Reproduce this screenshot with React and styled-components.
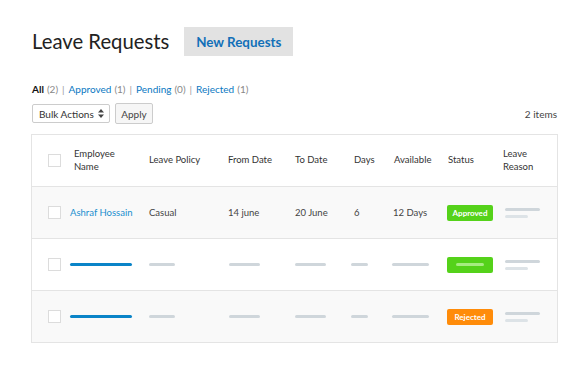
import React from "react";
import styled, { createGlobalStyle } from "styled-components";

const Global = createGlobalStyle`
  html, body { margin: 0; padding: 0; background: #fff; }
  body { font-family: Lato, "Open Sans", sans-serif; color: #333; }
`;

const Page = styled.div`
  padding: 27px 29px 0 31px;
`;

const TitleRow = styled.div`
  display: flex;
  align-items: center;
  height: 29px;
  padding-left: 1px;
`;

const Title = styled.h1`
  margin: 0;
  font-size: 20.3px;
  font-weight: 400;
  color: #222;
  line-height: 29px;
`;

const NewButton = styled.button`
  margin-left: 15px;
  height: 29px;
  width: 109px;
  border: none;
  background: #e2e2e2;
  color: #1270b8;
  font-family: Lato, sans-serif;
  font-size: 13.4px;
  font-weight: 700;
  padding: 0;
  cursor: pointer;
`;

const Filters = styled.div`
  margin-top: 27px;
  padding-left: 1px;
  font-size: 10px;
  line-height: 12px;
  color: #888;
  display: flex;
  gap: 4px;
`;

const FilterItem = styled.span`
  color: ${(p) => (p.$active ? "#111" : "#0a78c2")};
  font-weight: ${(p) => (p.$active ? 700 : 400)};
`;

const Count = styled.span`
  color: #888;
  margin-left: 3px;
`;

const Sep = styled.span`
  color: #999;
`;

const Toolbar = styled.div`
  margin-top: 8px;
  display: flex;
  align-items: center;
  padding-left: 1px;
`;

const Select = styled.div`
  display: flex;
  align-items: center;
  justify-content: space-between;
  height: 19px;
  width: 78px;
  box-sizing: border-box;
  border: 1px solid #ccc;
  border-radius: 2px;
  padding: 0 5px 0 6px;
  font-size: 10px;
  color: #333;
  background: #fff;
`;

const ApplyButton = styled.button`
  margin-left: 5px;
  height: 21px;
  width: 38px;
  border: 1px solid #ccc;
  border-radius: 2px;
  background: #f6f6f6;
  font-family: Lato, sans-serif;
  font-size: 10px;
  color: #444;
  padding: 0;
`;

const Items = styled.span`
  margin-left: auto;
  font-size: 10px;
  color: #444;
`;

const Table = styled.div`
  margin-top: 10px;
  border: 1px solid #e4e4e4;
  width: 527px;
  box-sizing: border-box;
`;

const Row = styled.div`
  display: grid;
  grid-template-columns: 22px 79px 79px 67px 57px 41px 54px 56px 1fr;
  align-items: center;
  height: 51px;
  padding-left: 16px;
  background: ${(p) => (p.$shade ? "#f9f9f9" : "#fff")};
  border-top: ${(p) => (p.$first ? "none" : "1px solid #e4e4e4")};
  font-size: 9.5px;
  color: #333;
`;

const HeadCell = styled.div`
  font-size: 9.5px;
  line-height: 12.5px;
  color: #333;
  padding-left: ${(p) => p.$pl || 0}px;
`;

const Cell = styled.div`
  color: #444;
  padding-left: ${(p) => p.$pl || 0}px;
`;

const NameLink = styled.a`
  color: #1a8fcf;
  text-decoration: none;
`;

const Checkbox = styled.span`
  display: block;
  width: 11px;
  height: 11px;
  border: 1px solid #dcdcdc;
  background: #fff;
`;

const Bar = styled.span`
  display: block;
  height: 3px;
  border-radius: 2px;
  width: ${(p) => p.$w}px;
  background: ${(p) => p.$color || "#cfd6db"};
  margin-left: ${(p) => p.$ml || 0}px;
`;

const Badge = styled.span`
  display: flex;
  align-items: center;
  justify-content: center;
  width: 46px;
  height: 16px;
  border-radius: 2px;
  box-sizing: border-box;
  background: ${(p) => p.$bg};
  color: #fff;
  font-size: 8px;
  font-weight: 700;
`;

const Reason = styled.div`
  display: flex;
  flex-direction: column;
  gap: 4px;
  margin-left: 2px;
`;

const SortIcon = () => (
  <svg width="6" height="9" viewBox="0 0 6 9">
    <path d="M3 0 L6 3.5 H0 Z" fill="#444" />
    <path d="M3 9 L6 5.5 H0 Z" fill="#444" />
  </svg>
);

const ReasonLines = () => (
  <Reason>
    <Bar $w={35} />
    <Bar $w={23} $color="#dde3e7" />
  </Reason>
);

const PlaceholderRow = ({ shade, status }) => (
  <Row $shade={shade}>
    <Checkbox />
    <Bar $w={62} $color="#0a84c8" />
    <Bar $w={26} />
    <Bar $w={31} $ml={1} />
    <Bar $w={31} />
    <Bar $w={17} $ml={-1} />
    <Bar $w={37} $ml={-1} />
    <div>{status}</div>
    <ReasonLines />
  </Row>
);

export default function App() {
  return (
    <Page>
      <Global />
      <TitleRow>
        <Title>Leave Requests</Title>
        <NewButton>New Requests</NewButton>
      </TitleRow>
      <Filters>
        <span>
          <FilterItem $active>All</FilterItem>
          <Count>(2)</Count>
        </span>
        <Sep>|</Sep>
        <span>
          <FilterItem>Approved</FilterItem>
          <Count>(1)</Count>
        </span>
        <Sep>|</Sep>
        <span>
          <FilterItem>Pending</FilterItem>
          <Count>(0)</Count>
        </span>
        <Sep>|</Sep>
        <span>
          <FilterItem>Rejected</FilterItem>
          <Count>(1)</Count>
        </span>
      </Filters>
      <Toolbar>
        <Select>
          <span>Bulk Actions</span>
          <SortIcon />
        </Select>
        <ApplyButton>Apply</ApplyButton>
        <Items>2 items</Items>
      </Toolbar>
      <Table>
        <Row $first>
          <Checkbox />
          <HeadCell $pl={4}>
            Employee
            <br />
            Name
          </HeadCell>
          <HeadCell>Leave Policy</HeadCell>
          <HeadCell>From Date</HeadCell>
          <HeadCell>To Date</HeadCell>
          <HeadCell $pl={2}>Days</HeadCell>
          <HeadCell $pl={1}>Available</HeadCell>
          <HeadCell $pl={1}>Status</HeadCell>
          <HeadCell>
            Leave
            <br />
            Reason
          </HeadCell>
        </Row>
        <Row $shade>
          <Checkbox />
          <Cell>
            <NameLink href="#">Ashraf Hossain</NameLink>
          </Cell>
          <Cell>Casual</Cell>
          <Cell>14 june</Cell>
          <Cell>20 June</Cell>
          <Cell $pl={2}>6</Cell>
          <Cell>12 Days</Cell>
          <div>
            <Badge $bg="#55d21a">Approved</Badge>
          </div>
          <ReasonLines />
        </Row>
        <PlaceholderRow
          status={
            <Badge $bg="#55d21a">
              <Bar $w={28} $color="#a6ec80" />
            </Badge>
          }
        />
        <PlaceholderRow shade status={<Badge $bg="#ff8c0a">Rejected</Badge>} />
      </Table>
    </Page>
  );
}
